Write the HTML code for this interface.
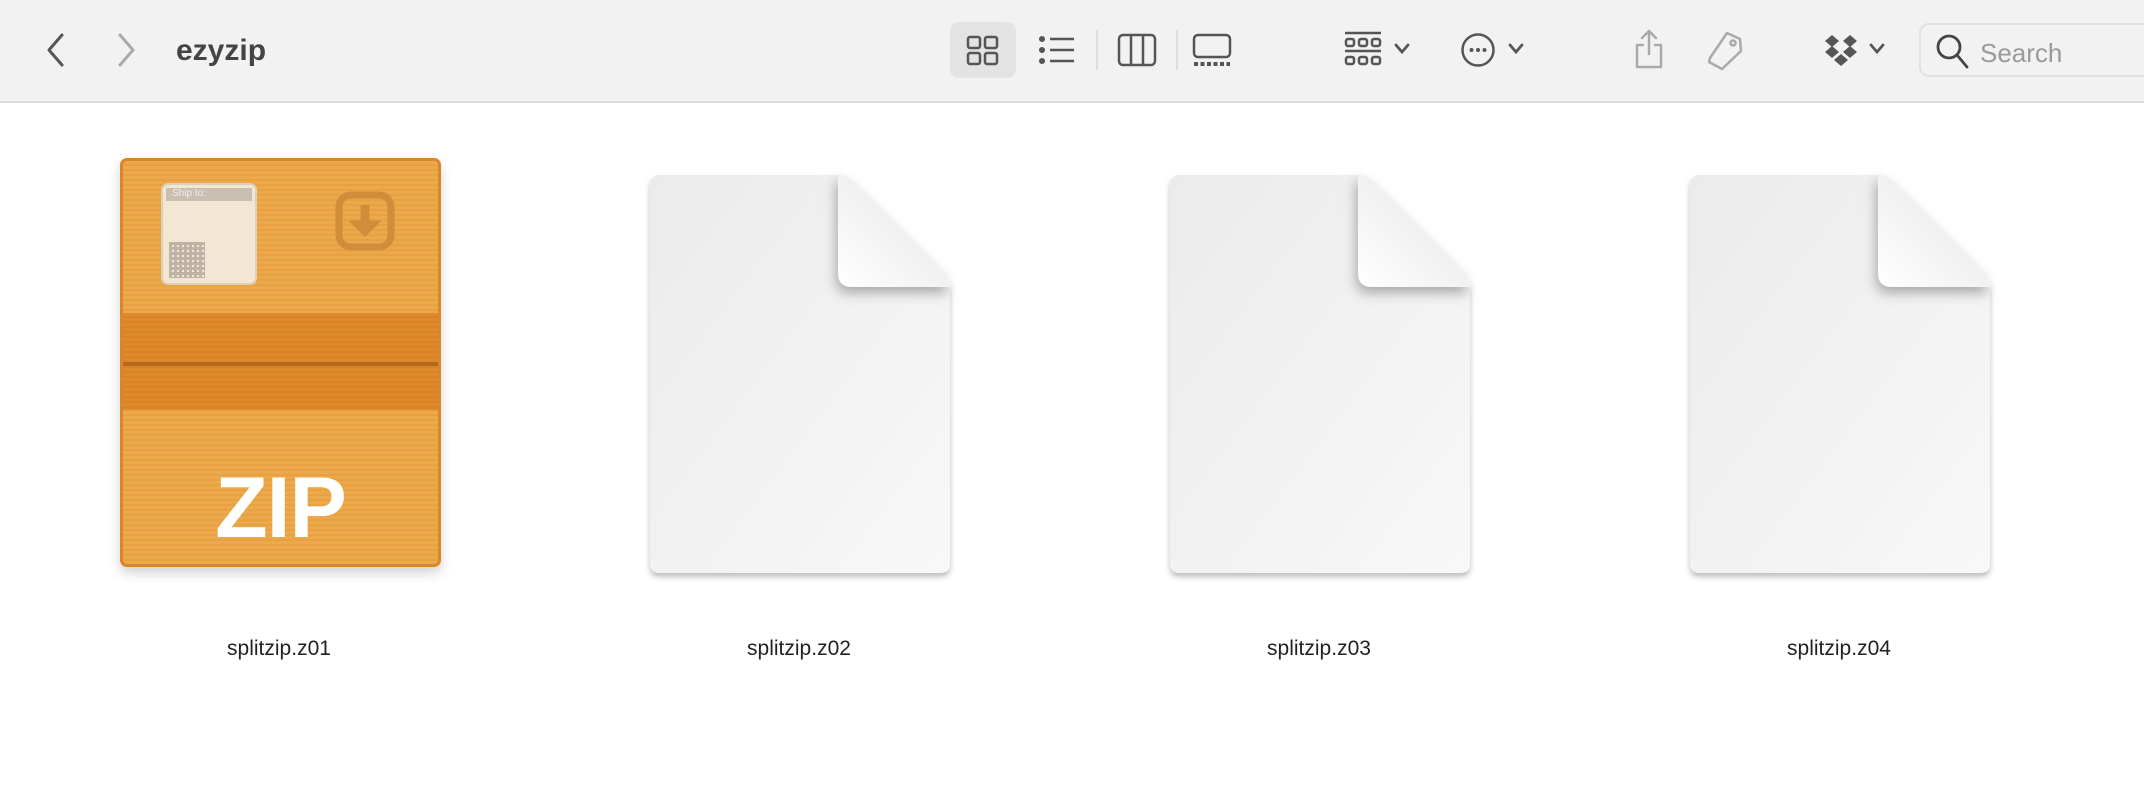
<!DOCTYPE html>
<html><head><meta charset="utf-8"><style>
html,body{margin:0;width:2144px;height:812px;background:#fff;overflow:hidden;font-family:"Liberation Sans",sans-serif}
.tb{position:absolute;left:0;top:0;width:2144px;height:101px;background:#f1f2f1;border-bottom:2px solid #dcdcdc}
.a{position:absolute}
.lbl{position:absolute;top:637px;width:300px;text-align:center;font-size:21px;color:#222}
.zip{position:absolute;left:120px;top:158px;width:321px;height:409px;border-radius:7px;
background:repeating-linear-gradient(#eca84c 0 3px,#e9a140 3px 5px);border:3px solid #d9852a;box-sizing:border-box;box-shadow:0 6px 12px rgba(0,0,0,.18)}
</style></head><body>
<div class="tb">
<svg class="a" style="left:40px;top:30px" width="30" height="40"><path d="M22 5 L9 20 L22 35" fill="none" stroke="#555" stroke-width="3" stroke-linecap="round" stroke-linejoin="round"/></svg>
<svg class="a" style="left:112px;top:30px" width="30" height="40"><path d="M8 5 L21 20 L8 35" fill="none" stroke="#aaa" stroke-width="3" stroke-linecap="round" stroke-linejoin="round"/></svg>
<div class="a" style="left:176px;top:34px;font-size:30px;font-weight:bold;color:#444">ezyzip</div>
<div class="a" style="left:950px;top:22px;width:66px;height:56px;background:#e2e3e2;border-radius:9px"></div>
<svg class="a" style="left:966px;top:35px" width="34" height="32" fill="none" stroke="#555" stroke-width="2.5"><rect x="2" y="2" width="12" height="11" rx="2"/><rect x="19" y="2" width="12" height="11" rx="2"/><rect x="2" y="18" width="12" height="11" rx="2"/><rect x="19" y="18" width="12" height="11" rx="2"/></svg>
<svg class="a" style="left:1038px;top:35px" width="38" height="30" stroke="#555" stroke-width="2.5"><circle cx="4" cy="4" r="1.8" fill="#555"/><circle cx="4" cy="15" r="1.8" fill="#555"/><circle cx="4" cy="26" r="1.8" fill="#555"/><path d="M12 4H36M12 15H36M12 26H36"/></svg>
<div class="a" style="left:1096px;top:30px;width:2px;height:40px;background:#ddd"></div>
<svg class="a" style="left:1117px;top:33px" width="40" height="34" fill="none" stroke="#555" stroke-width="2.5"><rect x="2" y="2" width="36" height="30" rx="4"/><path d="M14 2V32M26 2V32"/></svg>
<div class="a" style="left:1176px;top:30px;width:2px;height:40px;background:#ddd"></div>
<svg class="a" style="left:1192px;top:33px" width="40" height="34" fill="none" stroke="#555" stroke-width="2.5"><rect x="2" y="2" width="36" height="22" rx="4"/><path d="M2 31H38" stroke-dasharray="4 2.5" stroke-width="4"/></svg>
<svg class="a" style="left:1344px;top:31px" width="38" height="38" fill="none" stroke="#555" stroke-width="2.5"><path d="M1 2H37M1 20H37"/><rect x="2" y="8" width="8" height="7" rx="2"/><rect x="15" y="8" width="8" height="7" rx="2"/><rect x="28" y="8" width="8" height="7" rx="2"/><rect x="2" y="26" width="8" height="7" rx="2"/><rect x="15" y="26" width="8" height="7" rx="2"/><rect x="28" y="26" width="8" height="7" rx="2"/></svg>
<svg class="a" style="left:1393px;top:42px" width="18" height="14"><path d="M3 3L9 10L15 3" fill="none" stroke="#555" stroke-width="2.8" stroke-linecap="round"/></svg>
<svg class="a" style="left:1460px;top:32px" width="36" height="36"><circle cx="18" cy="18" r="15.5" fill="none" stroke="#555" stroke-width="2.5"/><circle cx="11.5" cy="18" r="2" fill="#555"/><circle cx="18" cy="18" r="2" fill="#555"/><circle cx="24.5" cy="18" r="2" fill="#555"/></svg>
<svg class="a" style="left:1507px;top:42px" width="18" height="14"><path d="M3 3L9 10L15 3" fill="none" stroke="#555" stroke-width="2.8" stroke-linecap="round"/></svg>
<svg class="a" style="left:1632px;top:28px" width="34" height="42" fill="none" stroke="#aaa" stroke-width="2.5" stroke-linecap="round" stroke-linejoin="round"><path d="M17 3V26M10 10L17 3L24 10M11 17H5V39H29V17H23"/></svg>
<svg class="a" style="left:1705px;top:30px" width="40" height="42" fill="none" stroke="#aaa" stroke-width="2.5" stroke-linejoin="round"><path d="M22 3L35 9L36 21L17 39L4 32L5 28Z"/><circle cx="28" cy="13" r="2.5"/></svg>
<svg class="a" style="left:1824px;top:34px" width="34" height="34" fill="#555"><path d="M8 1L15 7L8 13L1 7Z M26 1L33 7L26 13L19 7Z M8 12L15 18L8 24L1 18Z M26 12L33 18L26 24L19 18Z M17 20L24 26L17 32L10 26Z"/></svg>
<svg class="a" style="left:1868px;top:42px" width="18" height="14"><path d="M3 3L9 10L15 3" fill="none" stroke="#555" stroke-width="2.8" stroke-linecap="round"/></svg>
<div class="a" style="left:1919px;top:23px;width:260px;height:54px;border:2px solid #e0e1e0;border-radius:10px;box-sizing:border-box"></div>
<svg class="a" style="left:1935px;top:33px" width="36" height="38" fill="none" stroke="#444" stroke-width="2.8" stroke-linecap="round"><circle cx="14" cy="14" r="11"/><path d="M22 22L32 34"/></svg>
<div class="a" style="left:1980px;top:38px;font-size:26px;color:#9a9a9a">Search</div>
</div>

<div class="zip">
<div class="a" style="left:0;right:0;top:152px;height:97px;background:repeating-linear-gradient(#dd8a2c 0 3px,#d98326 3px 5px)"></div>
<div class="a" style="left:0;right:0;top:201px;height:4px;background:#b86a1c"></div>
<div class="a" style="left:38px;top:22px;width:96px;height:102px;background:#f3e6d2;border-radius:7px;border:2px solid #ddd0bb;box-sizing:border-box">
 <div style="margin:3px;height:13px;background:#c9bfb0;font-size:10px;color:#eee;padding-left:6px">Ship to:</div>
 <div style="margin:3px;width:36px;height:36px;background:repeating-linear-gradient(90deg,#8a8278 0 3px,transparent 3px 5px),repeating-linear-gradient(#8a8278 0 3px,transparent 3px 5px);opacity:.5;position:absolute;top:54px;left:3px"></div>
</div>
<svg class="a" style="left:212px;top:30px" width="62" height="62" fill="none" stroke="#d18d3a" stroke-width="7"><rect x="4" y="4" width="52" height="52" rx="12"/><path d="M30 14V36" stroke-width="9"/><path d="M17 31L30 44L43 31Z" fill="#d18d3a" stroke-width="3"/></svg>
<div class="a" style="left:0;right:0;top:298px;text-align:center;color:#fff;font-size:86px;font-weight:bold;letter-spacing:-1px">ZIP</div>
</div>

<svg width="0" height="0" style="position:absolute"><defs>
<linearGradient id="pg" x1="0" y1="0" x2="1" y2="1"><stop offset="0" stop-color="#ebebeb"/><stop offset="1" stop-color="#f8f8f8"/></linearGradient>
<linearGradient id="fg" x1="0" y1="1" x2="1" y2="0"><stop offset="0" stop-color="#fff"/><stop offset="1" stop-color="#e4e4e4"/></linearGradient>
<filter id="sh" x="-10%" y="-10%" width="120%" height="120%"><feDropShadow dx="0" dy="4" stdDeviation="3" flood-opacity=".25"/></filter>
<filter id="fs" x="-30%" y="-30%" width="160%" height="160%"><feDropShadow dx="-2" dy="6" stdDeviation="6" flood-opacity=".3"/></filter>
</defs></svg>
<svg class="a" style="left:645px;top:170px" width="312" height="412"><g transform="translate(5,5)">
<path d="M10 0H188L300 112V388Q300 398 290 398H10Q0 398 0 388V10Q0 0 10 0Z" fill="url(#pg)" filter="url(#sh)"/>
<path d="M188 0Q198 0 205 8L294 97Q300 104 300 112H202Q188 112 188 98Z" fill="url(#fg)" filter="url(#fs)"/></g></svg>
<svg class="a" style="left:1165px;top:170px" width="312" height="412"><g transform="translate(5,5)">
<path d="M10 0H188L300 112V388Q300 398 290 398H10Q0 398 0 388V10Q0 0 10 0Z" fill="url(#pg)" filter="url(#sh)"/>
<path d="M188 0Q198 0 205 8L294 97Q300 104 300 112H202Q188 112 188 98Z" fill="url(#fg)" filter="url(#fs)"/></g></svg>
<svg class="a" style="left:1685px;top:170px" width="312" height="412"><g transform="translate(5,5)">
<path d="M10 0H188L300 112V388Q300 398 290 398H10Q0 398 0 388V10Q0 0 10 0Z" fill="url(#pg)" filter="url(#sh)"/>
<path d="M188 0Q198 0 205 8L294 97Q300 104 300 112H202Q188 112 188 98Z" fill="url(#fg)" filter="url(#fs)"/></g></svg>

<div class="lbl" style="left:129px">splitzip.z01</div>
<div class="lbl" style="left:649px">splitzip.z02</div>
<div class="lbl" style="left:1169px">splitzip.z03</div>
<div class="lbl" style="left:1689px">splitzip.z04</div>
</body></html>
